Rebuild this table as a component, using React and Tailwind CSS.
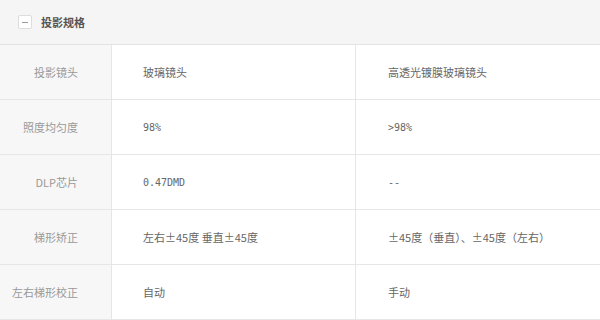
import React from 'react';

const rows = [
    { label: '投影镜头', a: '玻璃镜头', b: '高透光镀膜玻璃镜头' },
    { label: '照度均匀度', a: '98%', b: '>98%', mono: true },
    { label: 'DLP芯片', a: '0.47DMD', b: '--', mono: true },
    { label: '梯形矫正', a: '左右±45度 垂直±45度', b: '±45度（垂直）、±45度（左右）' },
    { label: '左右梯形校正', a: '自动', b: '手动' },
];

const cjk = "font-['Noto_Sans_CJK_SC',sans-serif]";
const mono = "font-['DejaVu_Sans_Mono',monospace] text-[10px]";

const App = () => {
    return (
        <div className={`w-[600px] h-[320px] bg-white overflow-hidden text-[11px] ${cjk}`}>
            {/* section header */}
            <div className="h-[45px] bg-[#f5f5f5] border-b border-[#e3e3e3] flex items-center pl-[18px] gap-[9px]">
                <div className="w-[14px] h-[14px] bg-white border border-[#dcdcdc] rounded-[2px] flex items-center justify-center">
                    <div className="w-[6px] h-px bg-[#999]"></div>
                </div>
                <span className="font-bold text-[#555]">投影规格</span>
            </div>

            {rows.map((row) => (
                <div key={row.label} className="flex h-[55px] border-b border-[#e6e6e6]">
                    <div className="w-[112px] bg-[#f7f7f7] border-r border-[#e6e6e6] flex items-center justify-end pr-[33px] text-[#999]">
                        {row.label}
                    </div>
                    <div className={`w-[244px] border-r border-[#e6e6e6] flex items-center pl-[31px] text-[#666] ${row.mono ? mono : ''}`}>
                        {row.a}
                    </div>
                    <div className={`flex-1 flex items-center pl-[32px] text-[#666] ${row.mono ? mono : ''}`}>
                        {row.b}
                    </div>
                </div>
            ))}
        </div>
    );
};

export default App;
